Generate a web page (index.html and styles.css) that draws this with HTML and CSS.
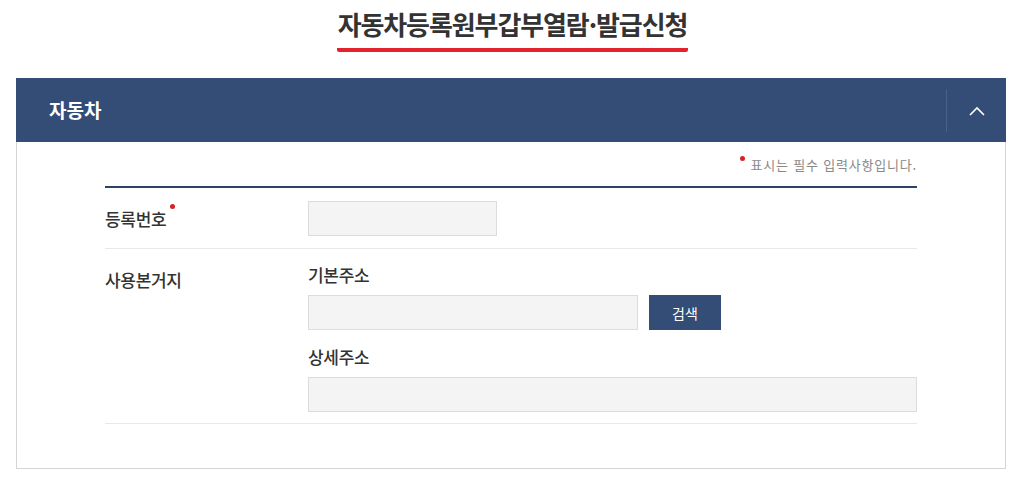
FILE: index.html
```html
<!DOCTYPE html>
<html lang="ko">
  <head>
    <meta charset="UTF-8" />
    <meta name="viewport" content="width=device-width, initial-scale=1.0" />
    <title>자동차등록원부갑부열람·발급신청</title>
    <link rel="stylesheet" href="styles.css">
  </head>
  <body>
    <div class="page_title">
      <h1 class="h1">자동차등록원부갑부열람·발급신청</h1>
    </div>

    <div class="panel">
      <div class="panel_head">
        <h2 class="panel_title">자동차</h2>
        <button class="toggle" type="button" aria-label="접기">
          <svg width="16" height="10" viewBox="0 0 16 10">
            <polyline points="1,9 8,2 15,9" fill="none" stroke="#fff" stroke-width="1.6" />
          </svg>
        </button>
      </div>

      <div class="panel_body">
        <p class="note"><span class="req req_note"></span>표시는 필수 입력사항입니다.</p>

        <div class="form">
          <div class="row row_center">
            <div class="label">등록번호<span class="req req_label"></span></div>
            <div class="field">
              <input type="text" class="input input_short" />
            </div>
          </div>

          <div class="row">
            <div class="label label_top">사용본거지</div>
            <div class="field">
              <div class="sub_label">기본주소</div>
              <div class="inline">
                <input type="text" class="input input_mid" />
                <button type="button" class="search_button">검색</button>
              </div>
              <div class="sub_label sub_label_gap">상세주소</div>
              <input type="text" class="input input_full" />
            </div>
          </div>
        </div>
      </div>
    </div>
  </body>
</html>
```

FILE: styles.css
```css
body {
  margin: 0px;
  padding: 0px;
  background-color: white;
  font-family: "Noto Sans CJK KR", "Noto Sans", sans-serif;
  color: #333;
}
.page_title {
  text-align: center;
  padding-top: 5px;
  height: 73px;
}
.h1 {
  display: inline-block;
  margin: 0;
  font-size: 26px;
  font-weight: 700;
  letter-spacing: -1.1px;
  line-height: 38px;
  color: #333;
  padding: 0 1px 5px;
  border-bottom: 4px solid #e3222b;
  border-radius: 2px;
}
.panel {
  margin-left: 16px;
  width: 990px;
}
.panel_head {
  display: flex;
  align-items: stretch;
  height: 64px;
  background-color: #344d77;
}
.panel_title {
  flex: 1;
  margin: 0;
  padding-left: 33px;
  font-size: 19px;
  font-weight: 700;
  line-height: 64px;
  color: white;
}
.toggle {
  width: 60px;
  margin: 11px 0 10px;
  padding: 0;
  border: 0;
  border-left: 1px solid #4a6089;
  background: none;
  cursor: pointer;
  display: flex;
  align-items: center;
  justify-content: center;
}
.panel_body {
  border: 1px solid #d5d5d5;
  border-top: 0;
  padding: 13px 88px 44px;
}
.note {
  margin: 0 0 11px;
  text-align: right;
  font-size: 13px;
  letter-spacing: 0.8px;
  line-height: 20px;
  color: #888;
}
.req {
  display: inline-block;
  width: 5px;
  height: 5px;
  border-radius: 50%;
  background-color: #d3222a;
  vertical-align: top;
}
.req_note {
  margin: 1px 6px 0 0;
}
.req_label {
  margin-left: 4px;
  margin-top: -3px;
}
.form {
  border-top: 2px solid #2f4264;
}
.row {
  display: flex;
  padding: 14px 0 11px;
  border-bottom: 1px solid #e8e8e8;
}
.row_center {
  align-items: center;
  padding: 13px 0 12px;
}
.label {
  width: 203px;
  flex-shrink: 0;
  font-size: 17px;
  font-weight: 500;
  letter-spacing: -0.3px;
  line-height: 24px;
  color: #333;
}
.label_top {
  margin-top: 5px;
}
.field {
  flex: 1;
}
.sub_label {
  font-size: 17px;
  font-weight: 500;
  letter-spacing: -0.3px;
  line-height: 24px;
  margin-bottom: 8px;
}
.sub_label_gap {
  margin-top: 15px;
}
.inline {
  display: flex;
  gap: 11px;
}
.input {
  display: block;
  box-sizing: border-box;
  height: 35px;
  margin: 0;
  border: 1px solid #dcdcdc;
  background-color: #f4f4f4;
  outline: none;
}
.input_short {
  width: 189px;
}
.input_mid {
  width: 330px;
}
.input_full {
  width: 100%;
}
.search_button {
  width: 72px;
  height: 35px;
  border: 0;
  background-color: #344d77;
  color: white;
  font-family: inherit;
  font-size: 14px;
  cursor: pointer;
}
```
